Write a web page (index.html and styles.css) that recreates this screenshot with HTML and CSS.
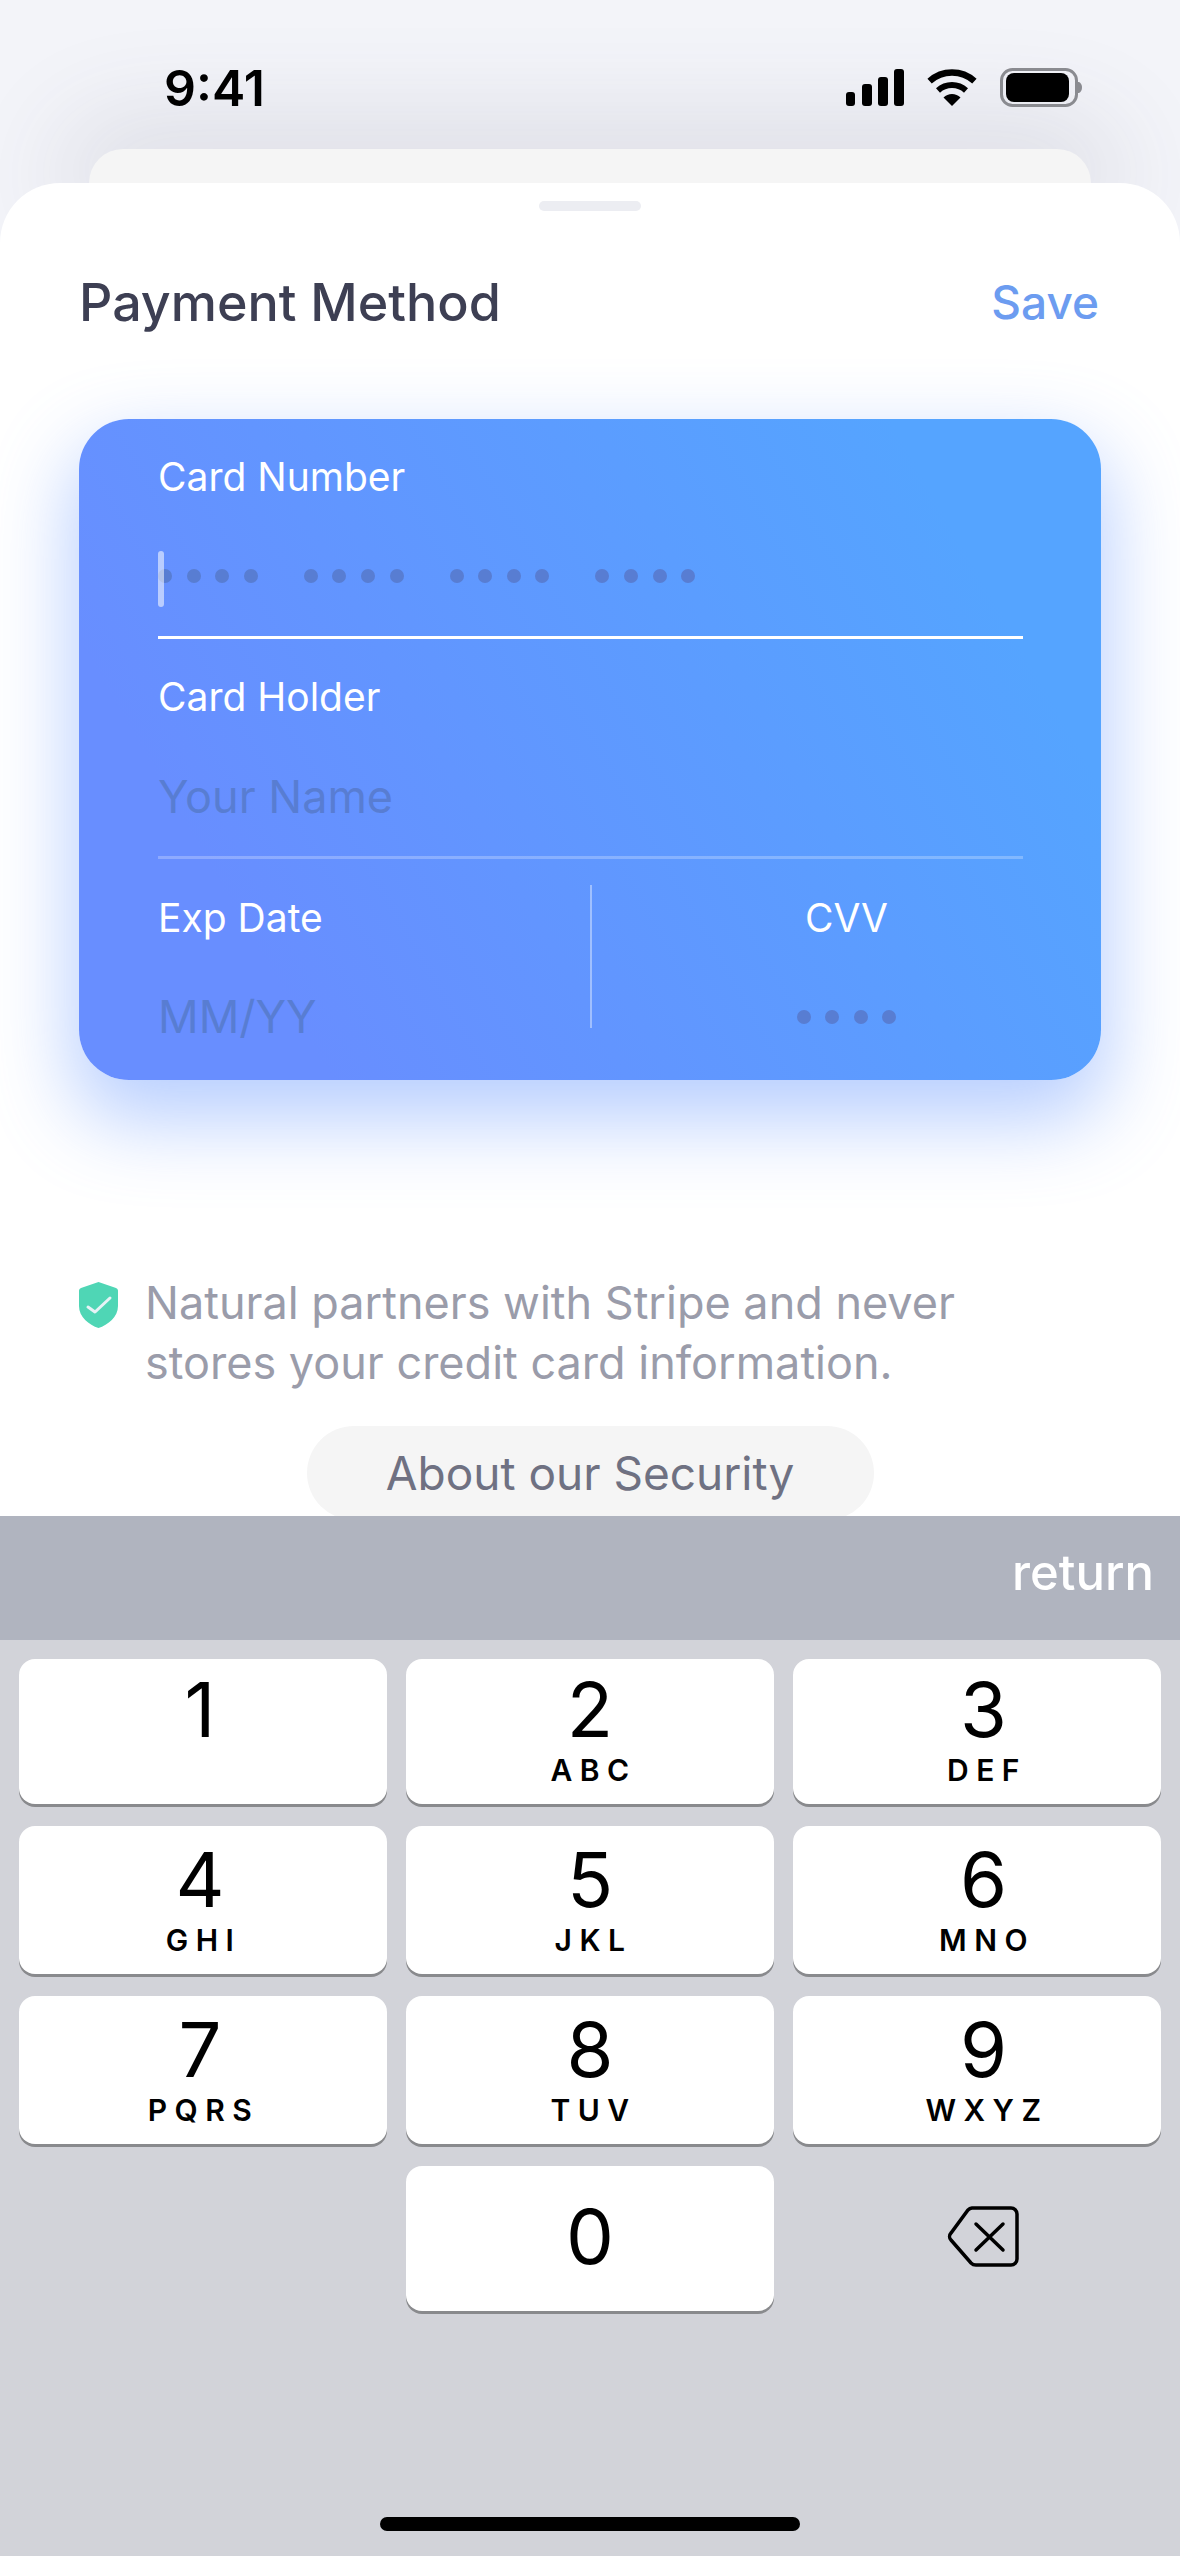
FILE: index.html
```html
<!DOCTYPE html>
<html lang="en">
<head>
    <meta charset="UTF-8">
    <meta name="viewport" content="width=device-width, initial-scale=1.0">
    <title>Payment Method</title>
    <link rel="stylesheet" href="styles.css">
</head>
<body>
    <div class="status-bar">
        <span class="time">9:41</span>
        <div class="status-icons">
            <svg width="58" height="37" viewBox="0 0 58 37">
                <rect x="0" y="23" width="9" height="14" rx="3"/>
                <rect x="16" y="15" width="10" height="22" rx="3"/>
                <rect x="32" y="8" width="10" height="29" rx="3"/>
                <rect x="48" y="0" width="10" height="37" rx="3"/>
            </svg>
            <svg width="50" height="37" viewBox="0 0 50 37">
                <path d="M2.6 12.1A33.5 33.5 0 0 1 47.4 12.1" fill="none" stroke="#000" stroke-width="6.5"/>
                <path d="M11 21.4A21 21 0 0 1 39 21.4" fill="none" stroke="#000" stroke-width="6"/>
                <path d="M25 37L16.5 28.5A12 12 0 0 1 33.5 28.5Z"/>
            </svg>
            <svg width="82" height="39" viewBox="0 0 82 39">
                <rect x="1.5" y="1.5" width="75" height="36" rx="11" fill="none" stroke="#8a8b90" stroke-width="3"/>
                <rect x="6" y="5" width="63" height="29" rx="8"/>
                <path d="M78 14c2 0 4 2 4 5.500s-2 5.500-4 5.500Z" fill="#8a8b90"/>
            </svg>
        </div>
    </div>
    <div class="back-card"></div>

    <div class="sheet">
        <div class="handle"></div>
        <div class="sheet-header">
            <h1>Payment Method</h1>
            <span class="save">Save</span>
        </div>

        <div class="card">
            <div class="field field-active">
                <div class="field-label">Card Number</div>
                <div class="field-value dots-row">
                    <span class="caret"></span>
                    <span class="dots"><i></i><i></i><i></i><i></i></span>
                    <span class="dots"><i></i><i></i><i></i><i></i></span>
                    <span class="dots"><i></i><i></i><i></i><i></i></span>
                    <span class="dots"><i></i><i></i><i></i><i></i></span>
                </div>
            </div>
            <div class="field">
                <div class="field-label">Card Holder</div>
                <div class="field-value">Your Name</div>
            </div>
            <div class="card-bottom">
                <div class="col">
                    <div class="field-label">Exp Date</div>
                    <div class="field-value">MM/YY</div>
                </div>
                <div class="col-divider"></div>
                <div class="col col-center">
                    <div class="field-label">CVV</div>
                    <div class="field-value dots-row">
                        <span class="dots"><i></i><i></i><i></i><i></i></span>
                    </div>
                </div>
            </div>
        </div>

        <div class="note">
            <svg class="shield" width="39" height="46" viewBox="0 0 39 46">
                <path d="M19.500 0L37 6a3 3 0 0 1 2 3V24C39 35 29 43 19.500 46C10 43 0 35 0 24V9a3 3 0 0 1 2-3Z" fill="#4fd6b5"/>
                <path d="M9 25L16 30L31 16" fill="none" stroke="#e6f3f6" stroke-width="3" stroke-linecap="round" stroke-linejoin="round"/>
            </svg>
            <p>Natural partners with Stripe and never<br>stores your credit card information.</p>
        </div>
        <div class="security-btn">About our Security</div>
    </div>

    <div class="accessory"><span>return</span></div>
    <div class="keyboard">
        <div class="keys">
            <div class="key"><span class="num">1</span></div>
            <div class="key"><span class="num">2</span><span class="letters">ABC</span></div>
            <div class="key"><span class="num">3</span><span class="letters">DEF</span></div>
            <div class="key"><span class="num">4</span><span class="letters">GHI</span></div>
            <div class="key"><span class="num">5</span><span class="letters">JKL</span></div>
            <div class="key"><span class="num">6</span><span class="letters">MNO</span></div>
            <div class="key"><span class="num">7</span><span class="letters">PQRS</span></div>
            <div class="key"><span class="num">8</span><span class="letters">TUV</span></div>
            <div class="key"><span class="num">9</span><span class="letters">WXYZ</span></div>
            <div class="key-blank"></div>
            <div class="key key-zero"><span class="num">0</span></div>
            <div class="key-blank key-delete">
                <svg width="73" height="61" viewBox="0 0 73 61">
                    <path d="M25 2H64a6 6 0 0 1 6 6V53a6 6 0 0 1-6 6H29a7 7 0 0 1-5-2L4 34a5 5 0 0 1 0-7L21 4a7 7 0 0 1 4-2Z" fill="none" stroke="#000" stroke-width="3.500"/>
                    <path d="M29 18L56 44M56 18L29 44" fill="none" stroke="#000" stroke-width="3.500" stroke-linecap="round"/>
                </svg>
            </div>
        </div>
        <div class="home-bar"></div>
    </div>
</body>
</html>
```

FILE: styles.css
```css
* {
    box-sizing: border-box;
}
body {
    margin: 0;
    width: 1180px;
    height: 2556px;
    overflow: hidden;
    background-color: #f3f4f9;
    font-family: "Inter", "Liberation Sans", sans-serif;
}
.status-bar {
    height: 149px;
    padding: 58px 98px 0 164px;
    display: flex;
    justify-content: space-between;
    align-items: flex-start;
}
.time {
    font-size: 50px;
    line-height: 60px;
    font-weight: 600;
    color: #000;
}
.status-icons {
    display: flex;
    gap: 23px;
    align-items: center;
    margin-top: 10px;
}
.back-card {
    height: 34px;
    margin: 0 89px;
    background-color: #f5f5f5;
    border-radius: 40px 40px 0 0;
    box-shadow: 0 0 100px 30px rgba(70, 70, 95, 0.13);
}
.sheet {
    position: relative;
    height: 1333px;
    overflow: hidden;
    background-color: #fff;
    border-radius: 60px 60px 0 0;
}
.handle {
    width: 102px;
    height: 10px;
    margin: 18px auto 0;
    border-radius: 5px;
    background-color: #ecedf2;
}
.sheet-header {
    height: 60px;
    margin-top: 61px;
    padding: 0 81px 0 79px;
    display: flex;
    justify-content: space-between;
    align-items: center;
}
.sheet-header h1 {
    margin: 2px 0 0;
    font-size: 52px;
    line-height: 60px;
    font-weight: 500;
    color: #3d3f53;
}
.save {
    font-size: 46px;
    font-weight: 500;
    color: #6c9cf0;
}
.card {
    width: 1022px;
    height: 661px;
    margin: 87px 0 0 79px;
    border-radius: 50px;
    background: linear-gradient(60deg, #688eff 18%, #55a4ff 85%);
    box-shadow: 0 34px 80px 6px rgba(96, 146, 255, 0.45);
}
.field {
    margin: 0 78px 0 79px;
    padding: 34px 0 31px;
    border-bottom: 3px solid rgba(255, 255, 255, 0.25);
}
.field-active {
    padding: 34px 0 32px;
    border-bottom-color: #fff;
}
.field-label {
    font-size: 39px;
    line-height: 48px;
    color: #fff;
}
.field-value {
    margin-top: 48px;
    height: 56px;
    font-size: 45px;
    line-height: 56px;
    color: #587dd2;
}
.field-active .field-value {
    margin-top: 47px;
}
.dots-row {
    position: relative;
    display: flex;
    align-items: center;
    gap: 46px;
}
.dots {
    display: flex;
    gap: 14.6px;
}
.field-active .dots:first-of-type {
    margin-left: 2px;
}
.dots i {
    width: 14px;
    height: 14px;
    border-radius: 50%;
    background-color: #587dd2;
}
.caret {
    position: absolute;
    left: 0;
    top: 3px;
    width: 6px;
    height: 56px;
    border-radius: 3px;
    background-color: rgba(255, 255, 255, 0.55);
}
.card-bottom {
    display: flex;
    padding-left: 79px;
}
.col {
    width: 432px;
    padding-top: 35px;
}
.col .field-value {
    margin-top: 47px;
}
.col-center {
    flex: 1;
    display: flex;
    flex-direction: column;
    align-items: center;
}
.col-divider {
    width: 2px;
    height: 143px;
    margin-top: 26px;
    background-color: rgba(255, 255, 255, 0.4);
}
.note {
    margin: 193px 0 0 79px;
    display: flex;
    align-items: flex-start;
    gap: 27px;
}
.shield {
    margin-top: 9px;
    flex-shrink: 0;
}
.note p {
    margin: 0;
    font-size: 45px;
    line-height: 60px;
    color: #9a9caa;
}
.security-btn {
    width: 567px;
    height: 94px;
    margin: 33px auto 0;
    border-radius: 47px;
    background-color: #f5f5f5;
    color: #6f7182;
    font-size: 46px;
    line-height: 94px;
    text-align: center;
}
.accessory {
    height: 124px;
    padding: 0 26px 12px 0;
    background-color: #b0b4bf;
    display: flex;
    justify-content: flex-end;
    align-items: center;
    color: #fff;
    font-size: 49px;
    font-weight: 500;
}
.keyboard {
    height: 916px;
    background-color: #d2d3d9;
    padding: 19px 19px 0;
}
.keys {
    display: grid;
    grid-template-columns: repeat(3, 1fr);
    grid-template-rows: 145px 148px 148px 145px;
    gap: 22px 19px;
}
.key {
    padding-top: 13px;
    border-radius: 16px;
    background-color: #fff;
    box-shadow: 0 3px 0 #898a8d;
    display: flex;
    flex-direction: column;
    align-items: center;
}
.key:nth-child(-n+3) {
    padding-top: 10px;
}
.key:nth-child(3n+1) {
    padding-right: 6px;
}
.key:nth-child(3n) {
    padding-left: 13px;
}
.key-zero {
    padding: 0 0 6px;
    justify-content: center;
}
.num {
    font-size: 76px;
    line-height: 80px;
    color: #000;
}
.letters {
    margin-top: 6px;
    padding-left: 7px;
    font-size: 30px;
    line-height: 30px;
    font-weight: 600;
    letter-spacing: 7.5px;
    color: #000;
}
.key-delete {
    display: flex;
    justify-content: center;
    align-items: center;
    padding: 0 0 4px 13px;
}
.home-bar {
    width: 420px;
    height: 14px;
    margin: 206px auto 0;
    border-radius: 7px;
    background-color: #000;
}
```
